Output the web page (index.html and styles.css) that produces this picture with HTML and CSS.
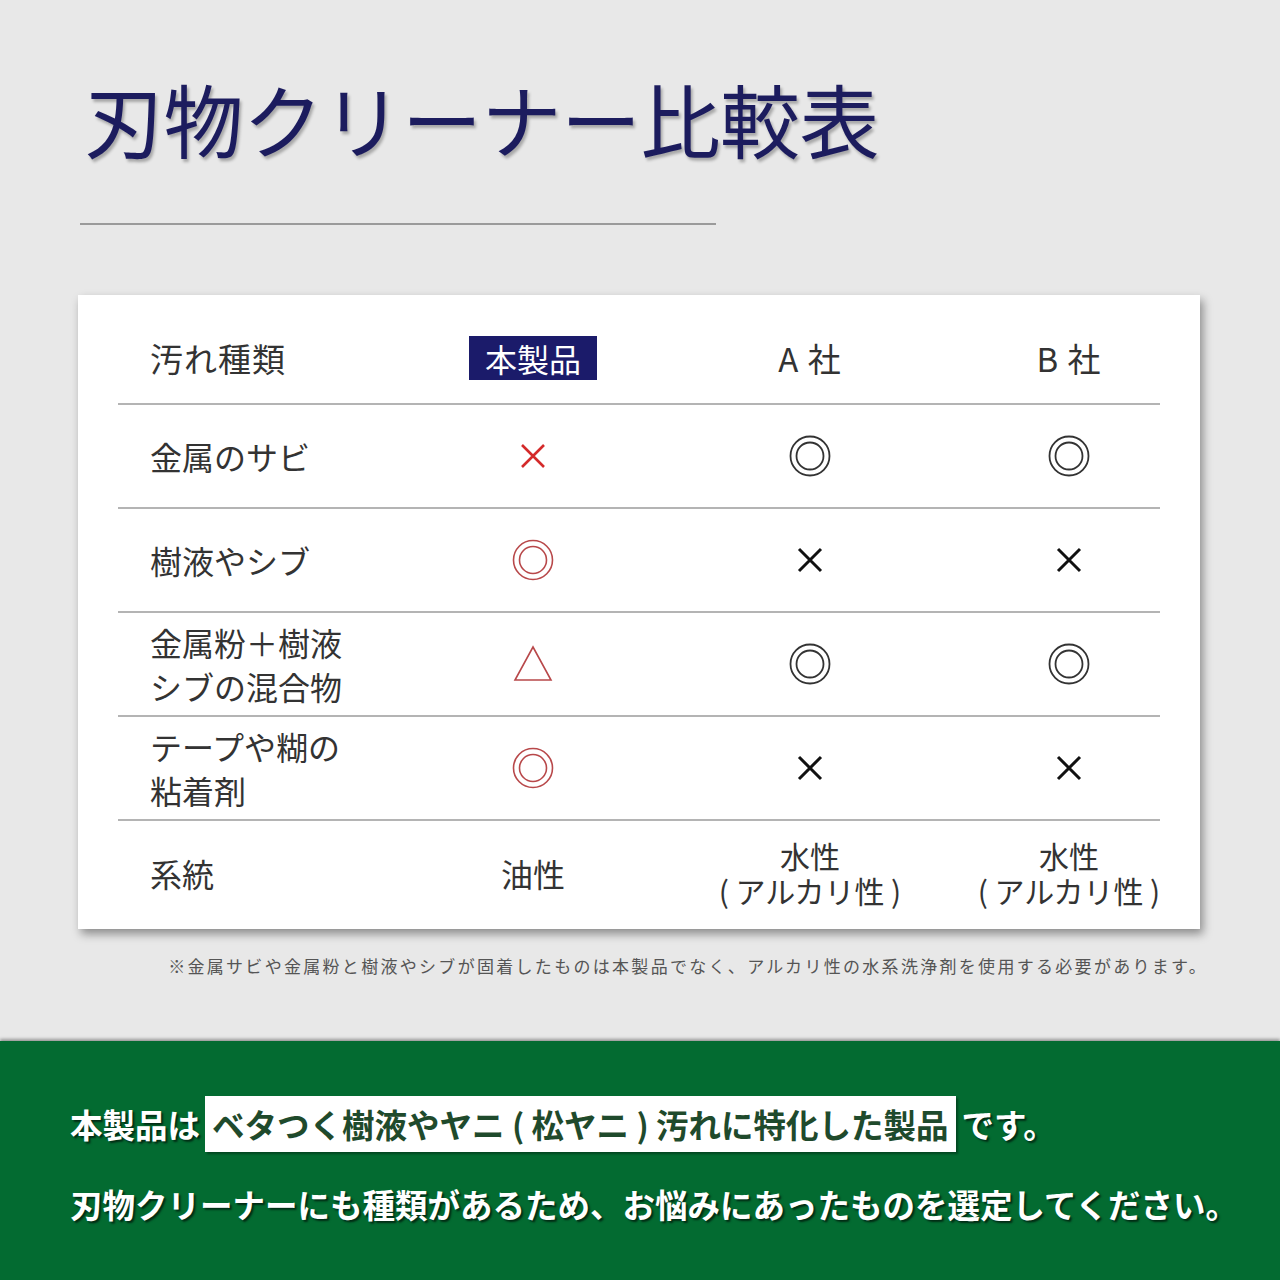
FILE: index.html
```html
<!DOCTYPE html>
<html lang="ja">
<head>
<meta charset="utf-8">
<link rel="stylesheet" href="styles.css">
</head>
<body>
<div class="page">
  <section class="top">
    <h1 class="title">刃物クリーナー比較表</h1>
    <div class="rule"></div>
    <div class="card">
      <div class="table">
        <div class="row head">
          <div class="label">汚れ種類</div>
          <div class="cell"><span class="badge">本製品</span></div>
          <div class="cell">A 社</div>
          <div class="cell">B 社</div>
        </div>
        <div class="row">
          <div class="label">金属のサビ</div>
          <div class="cell"><svg class="mark" width="30" height="30" viewBox="0 0 30 30"><path d="M4 4L26 26M26 4L4 26" stroke="#d42a2a" stroke-width="2.6" fill="none"/></svg></div>
          <div class="cell"><svg class="mark" width="44" height="44" viewBox="0 0 44 44"><circle cx="22" cy="22" r="19.5" stroke="#333" stroke-width="1.8" fill="none"/><circle cx="22" cy="22" r="13.5" stroke="#333" stroke-width="1.8" fill="none"/></svg></div>
          <div class="cell"><svg class="mark" width="44" height="44" viewBox="0 0 44 44"><circle cx="22" cy="22" r="19.5" stroke="#333" stroke-width="1.8" fill="none"/><circle cx="22" cy="22" r="13.5" stroke="#333" stroke-width="1.8" fill="none"/></svg></div>
        </div>
        <div class="row">
          <div class="label">樹液やシブ</div>
          <div class="cell"><svg class="mark" width="44" height="44" viewBox="0 0 44 44"><circle cx="22" cy="22" r="19.5" stroke="#b8484a" stroke-width="1.6" fill="none"/><circle cx="22" cy="22" r="13.5" stroke="#b8484a" stroke-width="1.6" fill="none"/></svg></div>
          <div class="cell"><svg class="mark" width="30" height="30" viewBox="0 0 30 30"><path d="M4 4L26 26M26 4L4 26" stroke="#111" stroke-width="3" fill="none"/></svg></div>
          <div class="cell"><svg class="mark" width="30" height="30" viewBox="0 0 30 30"><path d="M4 4L26 26M26 4L4 26" stroke="#111" stroke-width="3" fill="none"/></svg></div>
        </div>
        <div class="row">
          <div class="label">金属粉＋樹液<br>シブの混合物</div>
          <div class="cell"><svg class="mark" width="40" height="38" viewBox="0 0 40 38"><path d="M20 2L38 35H2Z" stroke="#b8484a" stroke-width="1.6" fill="none" stroke-linejoin="miter"/></svg></div>
          <div class="cell"><svg class="mark" width="44" height="44" viewBox="0 0 44 44"><circle cx="22" cy="22" r="19.5" stroke="#333" stroke-width="1.8" fill="none"/><circle cx="22" cy="22" r="13.5" stroke="#333" stroke-width="1.8" fill="none"/></svg></div>
          <div class="cell"><svg class="mark" width="44" height="44" viewBox="0 0 44 44"><circle cx="22" cy="22" r="19.5" stroke="#333" stroke-width="1.8" fill="none"/><circle cx="22" cy="22" r="13.5" stroke="#333" stroke-width="1.8" fill="none"/></svg></div>
        </div>
        <div class="row">
          <div class="label">テープや糊の<br>粘着剤</div>
          <div class="cell"><svg class="mark" width="44" height="44" viewBox="0 0 44 44"><circle cx="22" cy="22" r="19.5" stroke="#b8484a" stroke-width="1.6" fill="none"/><circle cx="22" cy="22" r="13.5" stroke="#b8484a" stroke-width="1.6" fill="none"/></svg></div>
          <div class="cell"><svg class="mark" width="30" height="30" viewBox="0 0 30 30"><path d="M4 4L26 26M26 4L4 26" stroke="#111" stroke-width="3" fill="none"/></svg></div>
          <div class="cell"><svg class="mark" width="30" height="30" viewBox="0 0 30 30"><path d="M4 4L26 26M26 4L4 26" stroke="#111" stroke-width="3" fill="none"/></svg></div>
        </div>
        <div class="row last">
          <div class="label">系統</div>
          <div class="cell">油性</div>
          <div class="cell"><span class="l">水性</span><span class="l">( アルカリ性 )</span></div>
          <div class="cell"><span class="l">水性</span><span class="l">( アルカリ性 )</span></div>
        </div>
      </div>
    </div>
    <p class="note">※金属サビや金属粉と樹液やシブが固着したものは本製品でなく、アルカリ性の水系洗浄剤を使用する必要があります。</p>
  </section>
  <section class="bottom">
    <p class="line1">本製品は<span class="hl">ベタつく樹液やヤニ ( 松ヤニ ) 汚れに特化した製品</span>です。</p>
    <p class="line2">刃物クリーナーにも種類があるため、お悩みにあったものを選定してください。</p>
  </section>
</div>
</body>
</html>
```

FILE: styles.css
```css
* { box-sizing: border-box; }
html, body { margin: 0; padding: 0; }
body {
  width: 1280px;
  height: 1280px;
  overflow: hidden;
  background: #e8e8e8;
  font-family: "Noto Sans CJK JP", "Noto Sans", sans-serif;
  color: #333;
}
.page { width: 1280px; height: 1280px; display: flex; flex-direction: column; }
.top {
  height: 1041px;
  padding: 69px 0 0 0;
  background: #e8e8e8;
}
.title {
  margin: 0 0 0 84px;
  font-size: 80px;
  line-height: 96px;
  font-weight: 400;
  color: #1c1c5e;
  letter-spacing: -0.5px;
  text-shadow: 2px 3px 3px rgba(0,0,0,0.28);
}
.rule {
  margin: 58px 0 0 80px;
  width: 636px;
  height: 2px;
  background: #9a9a9a;
}
.card {
  margin: 70px 0 0 78px;
  width: 1122px;
  height: 634px;
  background: #fff;
  box-shadow: 3px 5px 9px rgba(0,0,0,0.4);
  padding: 0 40px;
}
.table { width: 1042px; }
.row {
  display: grid;
  grid-template-columns: 282px 266px 288px 230px;
  align-items: center;
  height: 104px;
  border-bottom: 2px solid #b4b4b4;
  font-size: 32px;
  line-height: 44px;
}
.row.head { height: 110px; padding-top: 18px; font-size: 33px; letter-spacing: 1px; }
.row.last { height: 108px; padding-bottom: 4px; border-bottom: none; }
.label { padding-left: 32px; color: #333; }
.cell { text-align: center; color: #333; display: flex; justify-content: center; align-items: center; flex-direction: column; }
.row.last .cell .l { display: block; font-size: 30px; line-height: 35px; }
.badge {
  display: inline-block;
  background: #1b1b6a;
  color: #fff;
  padding: 0 16px;
  height: 44px;
  line-height: 44px;
  font-size: 32px;
  letter-spacing: 0;
}
.mark { display: block; }
.note {
  margin: 24px 72px 0 0;
  text-align: right;
  font-size: 17px;
  letter-spacing: 2.3px;
  color: #555;
}
.bottom {
  flex: 1;
  background: #036b31;
  box-shadow: 0 -2px 3px rgba(0,0,0,0.35);
  padding: 55px 0 0 70px;
  color: #fff;
  font-weight: 700;
  font-size: 32.5px;
  text-shadow: 2px 2px 2px rgba(0,0,0,0.6);
}
.line1 { margin: 0; height: 56px; line-height: 56px; display: flex; align-items: center; }
.hl {
  display: inline-block;
  background: #fff;
  color: #1f4a2c;
  text-shadow: none;
  height: 56px;
  line-height: 56px;
  padding: 0 7px;
  margin: 0 6px 0 5px;
  box-shadow: 2px 2px 2px rgba(0,0,0,0.35);
}
.line2 { margin: 24px 0 0 0; line-height: 56px; }
```
